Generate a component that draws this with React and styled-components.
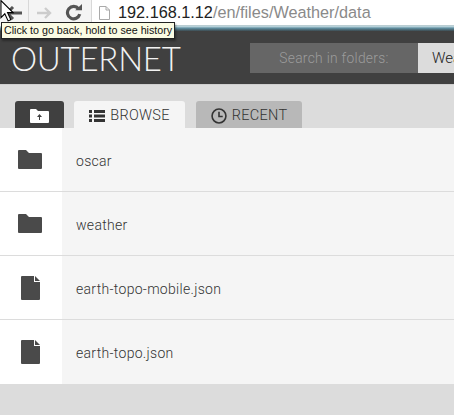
import React from 'react';
import styled, { createGlobalStyle } from 'styled-components';

const Global = createGlobalStyle`
    html, body {
        margin: 0;
        padding: 0;
        background: #dcdcdc;
    }
    body {
        font-family: Roboto, "Liberation Sans", sans-serif;
        font-weight: 300;
        overflow: hidden;
    }
`;

const Page = styled.div`
    width: 454px;
    height: 415px;
    position: relative;
    overflow: hidden;
`;

const Toolbar = styled.div`
    height: 26px;
    display: flex;
    align-items: center;
    background: #fff;
    border-bottom: 1px solid #b9cdd2;
    box-sizing: border-box;
`;

const NavButton = styled.div`
    width: ${p => p.$w}px;
    height: 26px;
    display: flex;
    align-items: center;
    justify-content: center;
    padding-right: ${p => p.$pad || 0}px;
    background: #f4f4f4;
    border-right: ${p => (p.$divider ? '1px solid #d8d8d8' : 'none')};
    box-sizing: border-box;
`;

const UrlBar = styled.div`
    flex: 1;
    display: flex;
    align-items: center;
    gap: 8px;
    padding-left: 7px;
    font-family: "Liberation Sans", sans-serif;
    font-weight: 400;
    font-size: 16.25px;
    color: #8a8a8a;
    span { color: #222; }
`;

const Accent = styled.div`
    height: 5px;
    background: linear-gradient(to bottom, #cfe4ea 0%, #5f8ea0 45%, #3c4a50 100%);
`;

const Header = styled.header`
    height: 54px;
    background: #404040;
    display: flex;
    align-items: center;
    border-bottom: 1px solid #cfcfcf;
    box-sizing: border-box;
`;

const Logo = styled.div`
    width: 250px;
    flex-shrink: 0;
    padding-left: 11px;
    box-sizing: border-box;
    font-family: Lato, sans-serif;
    font-weight: 300;
    font-size: 33px;
    color: #f2f2f2;
    letter-spacing: -0.25px;
`;

const Search = styled.div`
    display: flex;
    height: 30px;
    font-size: 13.8px;
`;

const SearchLabel = styled.div`
    width: 168px;
    flex-shrink: 0;
    display: flex;
    align-items: center;
    justify-content: center;
    background: #666;
    color: #9c9c9c;
    letter-spacing: 0.3px;
`;

const SearchInput = styled.div`
    width: 200px;
    flex-shrink: 0;
    display: flex;
    align-items: center;
    padding-left: 14px;
    background: #dcdcdc;
    color: #222;
    font-size: 15px;
`;

const Tabs = styled.nav`
    display: flex;
    align-items: flex-end;
    height: 43px;
    padding-left: 15px;
`;

const Tab = styled.div`
    height: 27px;
    width: ${p => p.$w}px;
    margin-right: ${p => p.$gap}px;
    box-sizing: border-box;
    padding-top: 2px;
    display: flex;
    align-items: center;
    justify-content: center;
    gap: 5px;
    border-radius: 3px 3px 0 0;
    font-size: 14.5px;
    letter-spacing: 0.3px;
    color: #333;
    background: ${p => p.$bg};
`;

const List = styled.ul`
    list-style: none;
    margin: 0;
    padding: 0;
`;

const Row = styled.li`
    height: 64px;
    display: flex;
    box-sizing: border-box;
    border-bottom: ${p => (p.$last ? 'none' : '1px solid #dcdcdc')};
`;

const IconCell = styled.div`
    width: 62px;
    box-sizing: border-box;
    padding-right: 2px;
    display: flex;
    align-items: center;
    justify-content: center;
    background: #fff;
`;

const NameCell = styled.div`
    flex: 1;
    display: flex;
    align-items: center;
    padding: 2px 0 0 14px;
    background: #f5f5f5;
    font-size: 14px;
    color: #333;
    letter-spacing: 0.3px;
`;

const Tooltip = styled.div`
    position: absolute;
    left: 1px;
    top: 22px;
    width: 174px;
    height: 17px;
    box-sizing: border-box;
    padding-left: 2px;
    background: #fbfbe3;
    border: 1px solid #222;
    box-shadow: 1px 2px 2px rgba(0, 0, 0, 0.35);
    font-family: "Liberation Sans", sans-serif;
    font-weight: 400;
    font-size: 10.7px;
    line-height: 15px;
    color: #111;
    white-space: nowrap;
`;

const Cursor = styled.svg`
    position: absolute;
    left: 0;
    top: 0;
`;

const FolderIcon = () => (
    <svg width="24" height="19" viewBox="0 0 24 19">
        <path d="M0 1Q0 0 1 0H8L11 3H23Q24 3 24 4V18Q24 19 23 19H1Q0 19 0 18Z" fill="#4a4a4a" />
    </svg>
);

const FileIcon = () => (
    <svg width="19" height="24" viewBox="0 0 19 24">
        <path d="M0 1Q0 0 1 0H13V6H19V23Q19 24 18 24H1Q0 24 0 23Z" fill="#4a4a4a" />
        <path d="M14 0L19 5H14Z" fill="#4a4a4a" />
    </svg>
);

const rows = [
    { name: 'oscar', icon: <FolderIcon /> },
    { name: 'weather', icon: <FolderIcon /> },
    { name: 'earth-topo-mobile.json', icon: <FileIcon /> },
    { name: 'earth-topo.json', icon: <FileIcon /> },
];

const App = () => (
    <Page>
        <Global />
        <Toolbar>
            <NavButton $w={29} $divider $pad={0}>
                <svg width="18" height="14" viewBox="0 0 18 14">
                    <path d="M8 1L2 7L8 13M2 7H17" stroke="#555" strokeWidth="3" fill="none" />
                </svg>
            </NavButton>
            <NavButton $w={29}>
                <svg width="16" height="12" viewBox="0 0 16 12">
                    <path d="M9 1L14 6L9 11M14 6H1" stroke="#ccc" strokeWidth="2.4" fill="none" />
                </svg>
            </NavButton>
            <NavButton $w={34} $divider $pad={3}>
                <svg width="17" height="17" viewBox="0 0 15 15">
                    <path d="M12 4.2A5.5 5.5 0 1 0 13 9" stroke="#555" strokeWidth="2.8" fill="none" />
                    <path d="M9 5.5H15V0Z" fill="#555" />
                </svg>
            </NavButton>
            <UrlBar>
                <svg width="11" height="14" viewBox="0 0 11 14">
                    <path d="M.5.5H7L10.5 4V13.5H.5ZM7 .5V4H10.5" stroke="#aaa" fill="#fff" />
                </svg>
                <div><span>192.168.1.12</span>/en/files/Weather/data</div>
            </UrlBar>
        </Toolbar>
        <Accent />
        <Header>
            <Logo>OUTERNET</Logo>
            <Search>
                <SearchLabel>Search in folders:</SearchLabel>
                <SearchInput>Weather</SearchInput>
            </Search>
        </Header>
        <Tabs>
            <Tab $w={49} $gap={10} $bg="#404040">
                <svg width="19" height="14" viewBox="0 0 19 14">
                    <path d="M0 1Q0 0 1 0H6L8 2H18Q19 2 19 3V13Q19 14 18 14H1Q0 14 0 13Z" fill="#fff" />
                    <path d="M9.5 5L7 8H9V11H10V8H12Z" fill="#404040" />
                </svg>
            </Tab>
            <Tab $w={111} $gap={11} $bg="#f5f5f5">
                <svg width="16" height="12" viewBox="0 0 16 12">
                    <path d="M0 0H3V3H0ZM5 0H16V3H5ZM0 4.5H3V7.5H0ZM5 4.5H16V7.5H5ZM0 9H3V12H0ZM5 9H16V12H5Z" fill="#333" />
                </svg>
                BROWSE
            </Tab>
            <Tab $w={106} $gap={0} $bg="#b8b8b8">
                <svg width="16" height="16" viewBox="0 0 15 15">
                    <circle cx="7.5" cy="7.5" r="6.5" stroke="#333" strokeWidth="1.5" fill="none" />
                    <path d="M7.5 3.5V8H11" stroke="#333" strokeWidth="1.5" fill="none" />
                </svg>
                RECENT
            </Tab>
        </Tabs>
        <List>
            {rows.map((row, i) => (
                <Row key={row.name} $last={i === rows.length - 1}>
                    <IconCell>{row.icon}</IconCell>
                    <NameCell>{row.name}</NameCell>
                </Row>
            ))}
        </List>
        <Tooltip>Click to go back, hold to see history</Tooltip>
        <Cursor width="14" height="22" viewBox="0 0 12 20">
            <path d="M.5.5V16L4 12.5L7 19L9.5 18L6.5 11.5H11.5Z" fill="#fff" stroke="#000" />
        </Cursor>
    </Page>
);

export default App;
